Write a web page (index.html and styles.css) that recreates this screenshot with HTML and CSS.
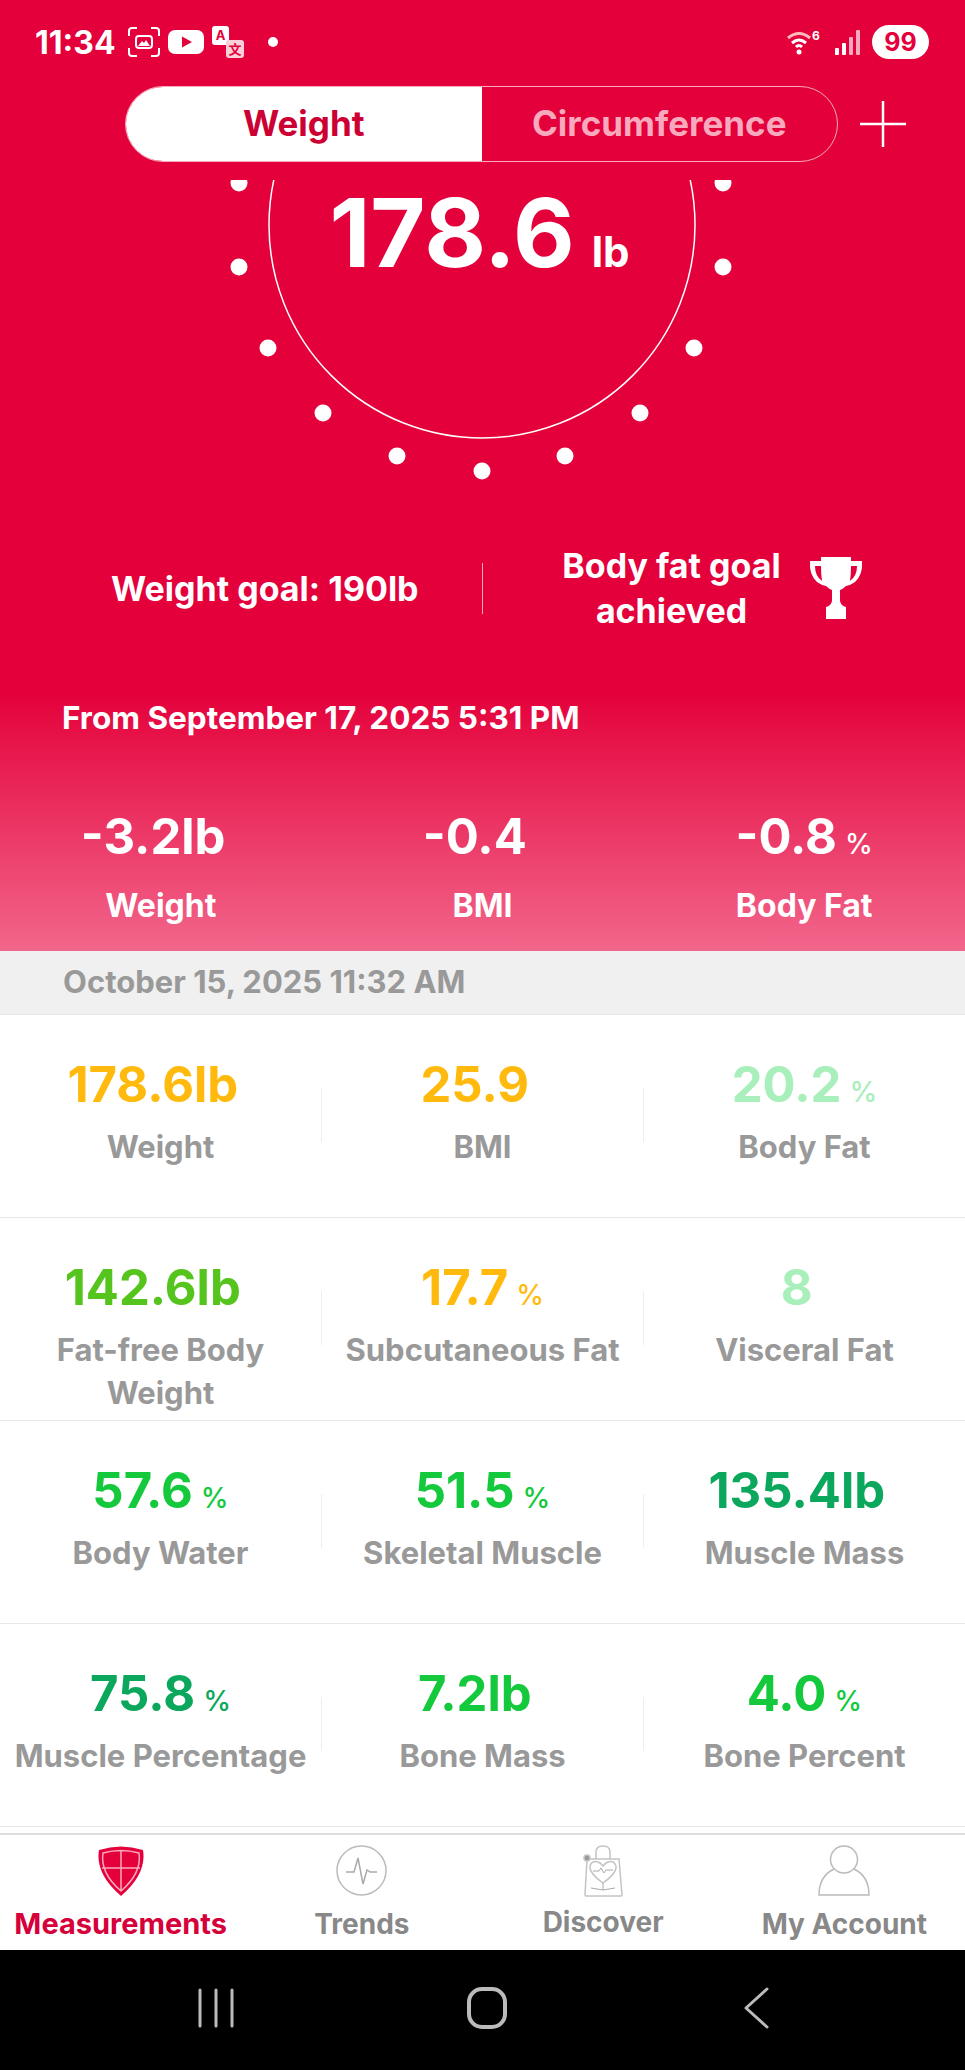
FILE: index.html
```html
<!DOCTYPE html>
<html lang="en">
<head>
    <meta charset="UTF-8">
    <meta name="viewport" content="width=device-width, initial-scale=1.0">
    <title>Measurements</title>
    <link rel="stylesheet" href="styles.css">
</head>
<body>

<div class="hero">
    <!-- Phone status bar -->
    <div class="status-bar">
        <span class="clock">11:34</span>
        <svg class="status-icon" width="32" height="30" viewBox="0 0 32 30" fill="none" stroke="#fff" stroke-width="2">
            <path d="M1 9V4q0-3 3-3h5M23 1h5q3 0 3 3v5M31 21v5q0 3-3 3h-5M9 29H4q-3 0-3-3v-5"/>
            <rect x="8" y="9" width="16" height="12" rx="3"/>
            <path d="M10 19l4-5 2 2 2-3 4 6z" fill="#fff" stroke="none"/>
        </svg>
        <svg class="status-icon" width="36" height="24" viewBox="0 0 36 24">
            <rect width="36" height="24" rx="7" fill="#fff"/>
            <path d="M14 6.500l10 5.500-10 5.500z" fill="#e4003a"/>
        </svg>
        <svg class="status-icon" width="32" height="32" viewBox="0 0 32 32">
            <rect x="0" y="0" width="17" height="19" rx="3" fill="#fff"/>
            <rect x="14" y="14" width="18" height="18" rx="3" fill="#fbd0da"/>
            <text x="8.500" y="14" class="translate-a">A</text>
            <text x="23" y="28" class="translate-x">文</text>
        </svg>
        <span class="status-dot"></span>
        <span class="status-spacer"></span>
        <svg class="status-icon" width="33" height="26" viewBox="0 0 33 26" fill="none" stroke="#fff" stroke-width="3">
            <path d="M1 9q11-9 22 0" stroke="#fbb"/>
            <path d="M5 14q7-6 14 0"/>
            <path d="M9 18q3-3 6 0"/>
            <circle cx="12" cy="23" r="2.500" fill="#fff" stroke="none"/>
            <text x="25" y="11" class="wifi-six">6</text>
        </svg>
        <svg class="status-icon signal" width="25" height="26" viewBox="0 0 25 26">
            <rect x="0" y="19" width="4" height="7" rx="1" fill="#fff"/>
            <rect x="7" y="14" width="4" height="12" rx="1" fill="#fff"/>
            <rect x="14" y="8" width="4" height="18" rx="1" fill="#f9a9bd"/>
            <rect x="21" y="1" width="4" height="25" rx="1" fill="#f9a9bd"/>
        </svg>
        <span class="battery">99</span>
    </div>

    <div class="switch-row">
        <div class="switch">
            <div class="switch-tab active">Weight</div>
            <div class="switch-tab">Circumference</div>
        </div>
        <svg class="add-icon" width="46" height="46" viewBox="0 0 46 46" stroke="#fff" stroke-width="2.500">
            <path d="M23 0v46M0 23h46"/>
        </svg>
    </div>

    <div class="gauge">
        <svg class="gauge-ring" width="965" height="320" viewBox="0 0 965 320">
            <circle cx="482" cy="45" r="213" fill="none" stroke="#fff" stroke-width="1.500"/>
            <g fill="#fff">
                <circle cx="239" cy="3" r="8.500"/>
                <circle cx="239" cy="87" r="8.500"/>
                <circle cx="268" cy="168" r="8.500"/>
                <circle cx="323" cy="233" r="8.500"/>
                <circle cx="397" cy="276" r="8.500"/>
                <circle cx="482" cy="291" r="8.500"/>
                <circle cx="565" cy="276" r="8.500"/>
                <circle cx="640" cy="233" r="8.500"/>
                <circle cx="694" cy="168" r="8.500"/>
                <circle cx="723" cy="87" r="8.500"/>
                <circle cx="723" cy="3" r="8.500"/>
            </g>
        </svg>
        <div class="gauge-value">178.6<span class="gauge-unit">lb</span></div>
    </div>

    <div class="goals">
        <div class="goal goal-weight">Weight goal: 190lb</div>
        <div class="goal-divider"></div>
        <div class="goal goal-fat">
            <div class="goal-fat-text">Body fat goal<br>achieved</div>
            <svg class="trophy" width="54" height="62" viewBox="0 0 54 62">
                <path d="M12 0h30v4h11q1 14-7 21-4 3-9 4-3 3-6 4v11q1 5 6 6v12H17V50q5-1 6-6V33q-3-1-6-4-5-1-9-4Q0 18 1 4h11zM6 9q0 10 7 15-1-6-1-15zm42 0h-6q0 9-1 15 7-5 7-15z" fill="#fff" fill-rule="evenodd"/>
            </svg>
        </div>
    </div>

    <div class="from-date">From September 17, 2025 5:31 PM</div>

    <div class="changes">
        <div class="change">
            <div class="change-value">-3.2lb<span class="unit">&nbsp;</span></div>
            <div class="change-label">Weight</div>
        </div>
        <div class="change">
            <div class="change-value">-0.4<span class="unit">&nbsp;</span></div>
            <div class="change-label">BMI</div>
        </div>
        <div class="change">
            <div class="change-value">-0.8<span class="unit">%</span></div>
            <div class="change-label">Body Fat</div>
        </div>
    </div>
</div>

<div class="date-bar">October 15, 2025 11:32 AM</div>

<!-- Measurement rows -->
<div class="metric-row">
    <div class="metric"><div class="metric-value amber">178.6lb<span class="unit">&nbsp;</span></div><div class="metric-label">Weight</div></div>
    <div class="metric-divider"></div>
    <div class="metric"><div class="metric-value amber">25.9<span class="unit">&nbsp;</span></div><div class="metric-label">BMI</div></div>
    <div class="metric-divider"></div>
    <div class="metric"><div class="metric-value mint">20.2<span class="unit">%</span></div><div class="metric-label">Body Fat</div></div>
</div>
<div class="metric-row">
    <div class="metric"><div class="metric-value lime">142.6lb<span class="unit">&nbsp;</span></div><div class="metric-label">Fat-free Body Weight</div></div>
    <div class="metric-divider"></div>
    <div class="metric"><div class="metric-value amber">17.7<span class="unit">%</span></div><div class="metric-label">Subcutaneous Fat</div></div>
    <div class="metric-divider"></div>
    <div class="metric"><div class="metric-value mint">8<span class="unit">&nbsp;</span></div><div class="metric-label">Visceral Fat</div></div>
</div>
<div class="metric-row">
    <div class="metric"><div class="metric-value green">57.6<span class="unit">%</span></div><div class="metric-label">Body Water</div></div>
    <div class="metric-divider"></div>
    <div class="metric"><div class="metric-value green">51.5<span class="unit">%</span></div><div class="metric-label">Skeletal Muscle</div></div>
    <div class="metric-divider"></div>
    <div class="metric"><div class="metric-value teal">135.4lb<span class="unit">&nbsp;</span></div><div class="metric-label">Muscle Mass</div></div>
</div>
<div class="metric-row">
    <div class="metric"><div class="metric-value teal">75.8<span class="unit">%</span></div><div class="metric-label">Muscle Percentage</div></div>
    <div class="metric-divider"></div>
    <div class="metric"><div class="metric-value green">7.2lb<span class="unit">&nbsp;</span></div><div class="metric-label">Bone Mass</div></div>
    <div class="metric-divider"></div>
    <div class="metric"><div class="metric-value green">4.0<span class="unit">%</span></div><div class="metric-label">Bone Percent</div></div>
</div>

<!-- Bottom tabs -->
<div class="tab-bar">
    <div class="tab active">
        <svg width="48" height="51" viewBox="0 0 48 51">
            <path d="M2 5Q24-2 46 5q4 24-22 46Q-2 29 2 5z" fill="#e4003a"/>
            <path d="M6 8Q24 3 42 8q3 20-18 38Q3 28 6 8zM24 5v41M5 23h38" fill="none" stroke="#f9a9bd" stroke-width="1.500"/>
        </svg>
        <span>Measurements</span>
    </div>
    <div class="tab">
        <svg width="51" height="51" viewBox="0 0 51 51" fill="none" stroke="#bbb" stroke-width="1.500">
            <circle cx="25.500" cy="25.500" r="24.500"/>
            <path d="M10 27h8l4-14 5 26 4-14 3 2h7" stroke="#aaa"/>
        </svg>
        <span>Trends</span>
    </div>
    <div class="tab tab-discover">
        <svg width="40" height="52" viewBox="0 0 40 52" fill="none" stroke="#c4c4c4" stroke-width="1.500">
            <path d="M4 14h32l3 36q0 1-1 1H3q-1 0-1-1z"/>
            <path d="M13 14V7q0-6 7-6t7 6v7"/>
            <circle cx="4" cy="13" r="3" fill="#999"/>
            <path d="M20 38Q6 28 7 21q2-6 8-4 3 1 5 4 2-3 5-4 6-2 8 4 1 7-13 17z"/>
            <path d="M10 26h6l2-3 3 5 2-3h7M8 43l12 2 12-2M20 38v7" stroke="#aaa" stroke-width="1"/>
        </svg>
        <span>Discover</span>
    </div>
    <div class="tab">
        <svg width="52" height="51" viewBox="0 0 52 51" fill="none" stroke="#bbb" stroke-width="1.500">
            <circle cx="26" cy="14.500" r="13.500"/>
            <path d="M16 24Q1 31 1 50h50q0-19-15-26"/>
        </svg>
        <span>My Account</span>
    </div>
</div>

<!-- Android nav bar -->
<div class="nav-bar">
    <svg width="36" height="40" viewBox="0 0 36 40" stroke="#bbb" stroke-width="3" stroke-linecap="round">
        <path d="M2 2v36M18 2v36M34 2v36"/>
    </svg>
    <svg class="nav-home" width="40" height="42" viewBox="0 0 40 42" fill="none" stroke="#bbb" stroke-width="4">
        <rect x="2" y="2" width="36" height="38" rx="13"/>
    </svg>
    <svg width="26" height="42" viewBox="0 0 26 42" fill="none" stroke="#bbb" stroke-width="3" stroke-linecap="round" stroke-linejoin="round">
        <path d="M24 2L3 21l21 19"/>
    </svg>
</div>

</body>
</html>
```

FILE: styles.css
```css
* {
    box-sizing: border-box;
}
body {
    margin: 0;
    width: 965px;
    background-color: #fff;
    font-family: Inter, "Liberation Sans", sans-serif;
    font-weight: 700;
}
.hero {
    height: 951px;
    color: #fff;
    background: linear-gradient(#e4003a 0, #e4003a 690px, #f2668b 951px);
}
.status-bar {
    display: flex;
    align-items: center;
    height: 84px;
    padding: 0 36px 0 35px;
}
.clock {
    width: 93px;
    font-size: 32px;
}
.status-icon {
    margin-right: 8px;
    flex-shrink: 0;
}
.translate-a {
    font-size: 13px;
    fill: #e4003a;
    text-anchor: middle;
}
.translate-x {
    font-size: 13px;
    fill: #e4003a;
    text-anchor: middle;
    font-family: "Noto Sans CJK SC", sans-serif;
}
.wifi-six {
    font-size: 12px;
    fill: #fff;
    stroke: none;
}
.status-dot {
    width: 10px;
    height: 10px;
    margin-left: 16px;
    border-radius: 50%;
    background-color: #fff;
}
.status-spacer {
    flex: 1;
}
.signal {
    margin-left: 7px;
    margin-right: 12px;
}
.battery {
    width: 57px;
    height: 34px;
    border-radius: 17px;
    background-color: #fff;
    color: #e4003a;
    font-size: 25px;
    line-height: 34px;
    text-align: center;
}
.switch-row {
    display: flex;
    align-items: center;
    height: 77px;
    margin-top: 1px;
    padding-left: 125px;
}
.switch {
    display: flex;
    width: 713px;
    height: 76px;
    border: 1.5px solid #f9a9bd;
    border-radius: 38px;
    overflow: hidden;
}
.switch-tab {
    flex: 1;
    font-size: 35px;
    line-height: 73px;
    text-align: center;
    color: #f9a9bd;
}
.switch-tab.active {
    background-color: #fff;
    color: #cc0033;
}
.add-icon {
    margin-left: 22px;
}
.gauge {
    position: relative;
    height: 362px;
    margin-top: 18px;
}
.gauge-ring {
    position: absolute;
    top: 0;
    left: 0;
}
.gauge-value {
    position: relative;
    padding: 3px 6px 0 0;
    font-size: 95px;
    line-height: 100px;
    text-align: center;
}
.gauge-unit {
    margin-left: 17px;
    font-size: 42px;
}
.goals {
    display: flex;
    align-items: center;
    height: 92px;
}
.goal {
    flex: none;
    width: 482px;
    font-size: 34px;
}
.goal-weight {
    padding-left: 111px;
}
.goal-divider {
    width: 1px;
    height: 51px;
    background-color: #f9a9bd;
}
.goal-fat {
    display: flex;
    align-items: center;
    padding-left: 77px;
    line-height: 45px;
}
.goal-fat-text {
    width: 223px;
    flex: none;
    text-align: center;
}
.trophy {
    margin-left: 26px;
}
.from-date {
    height: 173px;
    padding: 66px 0 0 62px;
    font-size: 31.5px;
    line-height: 36px;
}
.changes {
    display: flex;
}
.change {
    flex: 1;
    text-align: center;
}
.change-value {
    height: 79px;
    font-size: 49px;
    line-height: 60px;
}
.change-label {
    font-size: 32px;
    line-height: 40px;
}
.unit {
    margin-left: 8px;
    font-size: 28px;
    font-weight: 500;
}
.date-bar {
    height: 64px;
    padding-left: 63px;
    border-bottom: 1px solid #e6e6e6;
    background-color: #f0f0f0;
    color: #999;
    font-size: 31px;
    line-height: 62px;
}
.metric-row {
    display: flex;
    height: 203px;
    border-bottom: 1.5px solid #e8e8e8;
}
.metric {
    flex: 1;
    padding-top: 40px;
    text-align: center;
}
.metric-divider {
    width: 1px;
    height: 54px;
    margin-top: 73px;
    background-color: #eee;
}
.metric-value {
    height: 70px;
    font-size: 49px;
    line-height: 60px;
}
.metric-label {
    padding: 0 4px;
    color: #999;
    font-size: 31px;
    line-height: 43px;
}
.amber {
    color: #ffba0d;
}
.mint {
    color: #a8efbb;
}
.lime {
    color: #55c41c;
}
.green {
    color: #14c93c;
}
.teal {
    color: #0aa75c;
}
.tab-bar {
    display: flex;
    height: 117px;
    margin-top: 6px;
    border-top: 2px solid #ddd;
}
.tab {
    flex: 1;
    display: flex;
    flex-direction: column;
    align-items: center;
    padding-top: 10px;
    color: #888;
    font-size: 28px;
}
.tab span {
    margin-top: 11px;
    line-height: 34px;
    white-space: nowrap;
}
.tab.active {
    color: #d6003a;
    font-size: 29px;
}
.tab-discover span {
    margin-top: 8px;
}
.nav-bar {
    display: flex;
    justify-content: space-between;
    align-items: center;
    height: 121px;
    padding: 0 196px 6px 198px;
    background-color: #000;
}
.nav-home {
    margin-right: 4px;
}
```
